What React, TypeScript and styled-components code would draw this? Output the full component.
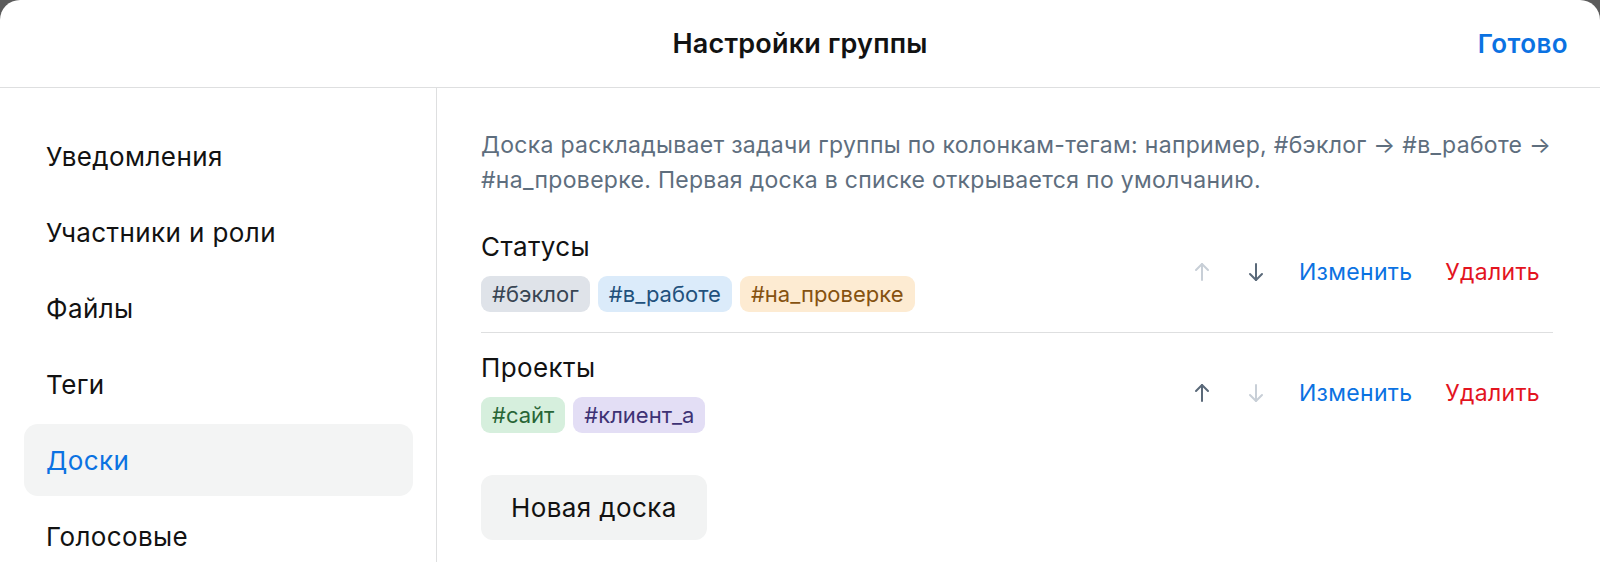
import React from "react";
import styled, { createGlobalStyle } from "styled-components";

const Global = createGlobalStyle`
  html, body {
    margin: 0;
    padding: 0;
    background: #5c5c5c;
    height: 100%;
    overflow: hidden;
  }
  #root {
    height: 100%;
  }
  * { box-sizing: border-box; }
`;

const Sheet = styled.div`
  width: 1600px;
  height: 562px;
  background: #ffffff;
  border-radius: 20px 20px 0 0;
  font-family: Inter, "Noto Sans", sans-serif;
  color: #121212;
  display: flex;
  flex-direction: column;
  overflow: hidden;
`;

const Header = styled.header`
  height: 88px;
  flex: 0 0 88px;
  border-bottom: 1px solid #dedfe0;
  display: grid;
  grid-template-columns: 1fr auto 1fr;
  align-items: center;
  padding: 0 32px;
`;

const Title = styled.h1`
  grid-column: 2;
  margin: 0;
  font-size: 27px;
  font-weight: 600;
  letter-spacing: 0.2px;
`;

const Done = styled.button`
  grid-column: 3;
  justify-self: end;
  border: 0;
  background: none;
  padding: 0;
  font: inherit;
  font-size: 26px;
  font-weight: 600;
  letter-spacing: 0.4px;
  color: #0b72e2;
  cursor: pointer;
`;

const Body = styled.div`
  flex: 1;
  display: flex;
  min-height: 0;
`;

const Sidebar = styled.nav`
  width: 437px;
  flex: 0 0 437px;
  border-right: 1px solid #dedfe0;
  padding: 32px 23px 0 24px;
  display: flex;
  flex-direction: column;
  gap: 4px;
`;

const NavItem = styled.div<{ $active?: boolean }>`
  height: 72px;
  flex: 0 0 72px;
  display: flex;
  align-items: center;
  padding: 0 22px;
  border-radius: 14px;
  font-size: 26px;
  letter-spacing: 0.4px;
  color: ${(p) => (p.$active ? "#0b72e2" : "#121212")};
  background: ${(p) => (p.$active ? "#f3f4f4" : "transparent")};
`;

const Content = styled.main`
  flex: 1;
  padding: 40px 47px 0 44px;
  display: flex;
  flex-direction: column;
`;

const Hint = styled.p`
  margin: 0 0 14px;
  font-size: 23px;
  line-height: 35px;
  white-space: nowrap;
  color: #5e6e7e;
  letter-spacing: 0.3px;
`;

const BoardRow = styled.div`
  display: flex;
  align-items: center;
  padding: 20px 0;
  border-bottom: 1px solid #dedfe0;
  &:last-of-type {
    border-bottom: 0;
  }
`;

const BoardInfo = styled.div`
  flex: 1;
  display: flex;
  flex-direction: column;
  gap: 14px;
`;

const BoardName = styled.div`
  font-size: 26px;
  line-height: 30px;
  letter-spacing: 0.4px;
`;

const TagList = styled.div`
  display: flex;
  gap: 8px;
`;

const tagPalette = {
  gray: { bg: "#dfe3e9", fg: "#384553" },
  blue: { bg: "#dbebfa", fg: "#22517c" },
  orange: { bg: "#fdebd2", fg: "#855210" },
  green: { bg: "#d6efdd", fg: "#286536" },
  purple: { bg: "#e3def5", fg: "#3e3274" },
};

type TagTone = keyof typeof tagPalette;

const Tag = styled.span<{ $tone: TagTone }>`
  height: 36px;
  display: inline-flex;
  align-items: center;
  padding: 0 11px;
  border-radius: 9px;
  font-size: 22px;
  background: ${(p) => tagPalette[p.$tone].bg};
  color: ${(p) => tagPalette[p.$tone].fg};
`;

const Actions = styled.div`
  display: flex;
  align-items: center;
  padding-right: 13px;
`;

const ArrowButton = styled.button<{ $enabled: boolean }>`
  width: 54px;
  height: 36px;
  border: 0;
  background: none;
  padding: 0;
  display: flex;
  align-items: center;
  justify-content: center;
  color: ${(p) => (p.$enabled ? "#5a6979" : "#c8cfd7")};
`;

const LinkButton = styled.button<{ $danger?: boolean }>`
  border: 0;
  background: none;
  padding: 0;
  margin-left: ${(p) => (p.$danger ? "33px" : "16px")};
  font: inherit;
  font-size: 23px;
  letter-spacing: 0.3px;
  color: ${(p) => (p.$danger ? "#e3141f" : "#0b72e2")};
  cursor: pointer;
`;

const NewBoard = styled.button`
  align-self: flex-start;
  margin-top: 22px;
  height: 65px;
  flex: 0 0 65px;
  padding: 0 30px;
  border: 0;
  border-radius: 12px;
  background: #f2f3f3;
  font: inherit;
  font-size: 26px;
  color: #121212;
  letter-spacing: 0.4px;
`;

const Arrow = ({ up }: { up: boolean }) => (
  <svg width="18" height="20" viewBox="0 0 18 20" fill="none">
    <g
      stroke="currentColor"
      strokeWidth="2"
      strokeLinecap="round"
      strokeLinejoin="round"
      transform={up ? undefined : "rotate(180 9 10)"}
    >
      <path d="M9 18V2" />
      <path d="M3 8l6-6 6 6" />
    </g>
  </svg>
);

type Board = { name: string; tags: { label: string; tone: TagTone }[] };

const boards: Board[] = [
  {
    name: "Статусы",
    tags: [
      { label: "#бэклог", tone: "gray" },
      { label: "#в_работе", tone: "blue" },
      { label: "#на_проверке", tone: "orange" },
    ],
  },
  {
    name: "Проекты",
    tags: [
      { label: "#сайт", tone: "green" },
      { label: "#клиент_а", tone: "purple" },
    ],
  },
];

const sections = [
  "Уведомления",
  "Участники и роли",
  "Файлы",
  "Теги",
  "Доски",
  "Голосовые",
];

export default function App() {
  return (
    <>
      <Global />
      <Sheet>
        <Header>
          <Title>Настройки группы</Title>
          <Done>Готово</Done>
        </Header>
        <Body>
          <Sidebar>
            {sections.map((s) => (
              <NavItem key={s} $active={s === "Доски"}>
                {s}
              </NavItem>
            ))}
          </Sidebar>
          <Content>
            <Hint>
              Доска раскладывает задачи группы по колонкам-тегам: например, #бэклог → #в_работе →
              <br />
              #на_проверке. Первая доска в списке открывается по умолчанию.
            </Hint>
            <div>
              {boards.map((b, i) => (
                <BoardRow key={b.name}>
                  <BoardInfo>
                    <BoardName>{b.name}</BoardName>
                    <TagList>
                      {b.tags.map((t) => (
                        <Tag key={t.label} $tone={t.tone}>
                          {t.label}
                        </Tag>
                      ))}
                    </TagList>
                  </BoardInfo>
                  <Actions>
                    <ArrowButton $enabled={i > 0} aria-label="Вверх">
                      <Arrow up />
                    </ArrowButton>
                    <ArrowButton $enabled={i < boards.length - 1} aria-label="Вниз">
                      <Arrow up={false} />
                    </ArrowButton>
                    <LinkButton>Изменить</LinkButton>
                    <LinkButton $danger>Удалить</LinkButton>
                  </Actions>
                </BoardRow>
              ))}
            </div>
            <NewBoard>Новая доска</NewBoard>
          </Content>
        </Body>
      </Sheet>
    </>
  );
}
